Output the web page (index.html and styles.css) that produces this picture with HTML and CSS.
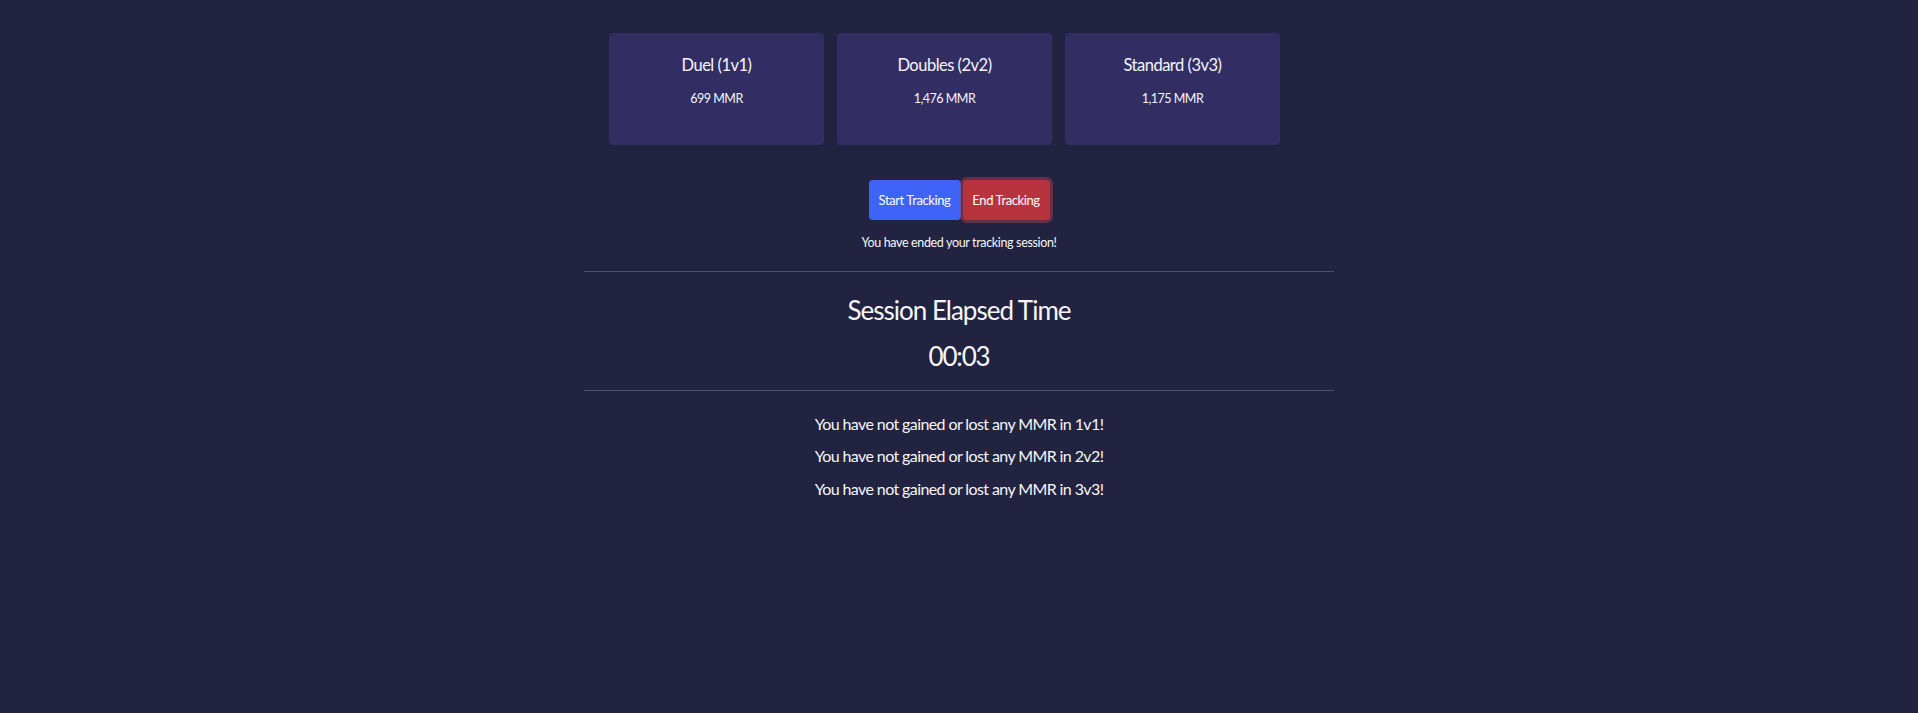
FILE: index.html
```html
<!DOCTYPE html>
<html lang="en">
<head>
<meta charset="utf-8">
<title>MMR Tracker</title>
<link rel="stylesheet" href="styles.css">
</head>
<body>
<main class="page">
  <section class="cards">
    <div class="card">
      <div class="card-title">Duel (1v1)</div>
      <div class="card-mmr">699 MMR</div>
    </div>
    <div class="card">
      <div class="card-title">Doubles (2v2)</div>
      <div class="card-mmr">1,476 MMR</div>
    </div>
    <div class="card">
      <div class="card-title">Standard (3v3)</div>
      <div class="card-mmr">1,175 MMR</div>
    </div>
  </section>

  <div class="actions">
    <button class="btn btn-start" type="button">Start Tracking</button>
    <button class="btn btn-end" type="button">End Tracking</button>
  </div>
  <p class="status">You have ended your tracking session!</p>

  <hr class="rule rule-top">

  <h2 class="elapsed-title">Session Elapsed Time</h2>
  <div class="elapsed-time">00:03</div>

  <hr class="rule rule-bottom">

  <ul class="results">
    <li>You have not gained or lost any MMR in 1v1!</li>
    <li>You have not gained or lost any MMR in 2v2!</li>
    <li>You have not gained or lost any MMR in 3v3!</li>
  </ul>
</main>
</body>
</html>
```

FILE: styles.css
```css
* {
  box-sizing: border-box;
}

html, body {
  margin: 0;
  padding: 0;
  background: #212341;
  height: 100%;
}

body {
  font-family: Lato, "Open Sans", "Liberation Sans", sans-serif;
  color: #f6f6fa;
}

.page {
  width: 750px;
  margin: 0 auto;
  padding-top: 33px;
  display: flex;
  flex-direction: column;
  align-items: stretch;
}

.cards {
  display: flex;
  gap: 13px;
  padding-left: 25px;
}

.card {
  width: 215px;
  height: 112px;
  background: #322e63;
  border-radius: 4px;
  padding-top: 22px;
  text-align: center;
}

.card-title {
  font-size: 16.5px;
  line-height: 20px;
  letter-spacing: -0.5px;
}

.card-mmr {
  margin-top: 16px;
  font-size: 12.5px;
  line-height: 16px;
  letter-spacing: -0.5px;
}

.actions {
  display: flex;
  justify-content: center;
  gap: 2px;
  margin-top: 35px;
}

.btn {
  font-family: inherit;
  font-size: 13px;
  line-height: 20px;
  letter-spacing: -0.4px;
  color: #ffffff;
  border: none;
  border-radius: 4px;
  padding: 10px 0;
  height: 40px;
  white-space: nowrap;
  cursor: pointer;
}

.btn-start {
  background: #3f63f6;
  width: 92px;
}

.btn-end {
  background: #b7343f;
  width: 87px;
  box-shadow: 0 0 0 3px rgba(160, 60, 80, 0.55);
}

.status {
  margin: 15px 0 0;
  text-align: center;
  font-size: 12.5px;
  line-height: 16px;
  letter-spacing: -0.35px;
}

.rule {
  border: none;
  height: 1px;
  background: #4d5070;
  margin: 0;
  width: 100%;
}

.rule-top {
  margin-top: 20px;
}

.elapsed-title {
  margin: 22px 0 0;
  text-align: center;
  font-weight: 400;
  font-size: 26px;
  line-height: 32px;
  letter-spacing: -1px;
}

.elapsed-time {
  margin-top: 14px;
  text-align: center;
  font-size: 26px;
  line-height: 32px;
  letter-spacing: -1.2px;
}

.rule-bottom {
  margin-top: 18px;
}

.results {
  list-style: none;
  margin: 17px 0 0;
  padding: 0;
  text-align: center;
  font-size: 16px;
  line-height: 32.4px;
  letter-spacing: -0.6px;
}
```
